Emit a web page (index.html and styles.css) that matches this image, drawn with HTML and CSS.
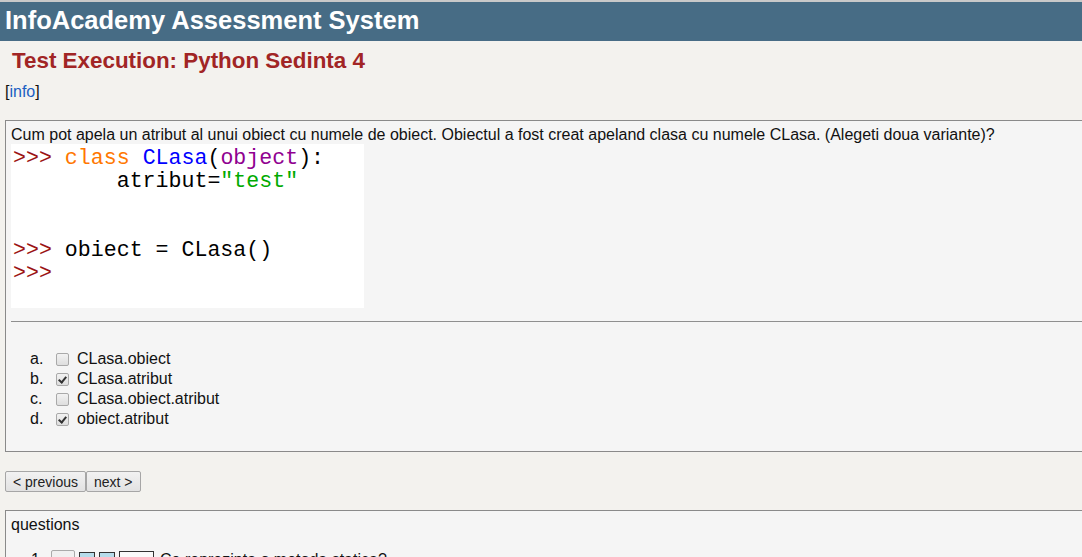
FILE: index.html
```html
<!DOCTYPE html>
<html lang="ro">
<head>
<meta charset="utf-8">
<title>InfoAcademy Assessment System</title>
<link rel="stylesheet" href="styles.css">
</head>
<body>
<header class="topbar">
  <h1 class="site-title">InfoAcademy Assessment System</h1>
</header>
<main class="content">
  <h2 class="page-title">Test Execution: Python Sedinta 4</h2>
  <p class="info">[<a href="#">info</a>]</p>

  <section class="panel question-box">
    <p class="question-text">Cum pot apela un atribut al unui obiect cu numele de obiect. Obiectul a fost creat apeland clasa cu numele CLasa. (Alegeti doua variante)?</p>
<pre class="code"><span class="pr">&gt;&gt;&gt;</span> <span class="kw">class</span> <span class="def">CLasa</span>(<span class="bi">object</span>):
        atribut=<span class="str">"test"</span>


<span class="pr">&gt;&gt;&gt;</span> obiect = CLasa()
<span class="pr">&gt;&gt;&gt;</span> </pre>
    <hr class="sep">
    <ol class="options">
      <li class="option"><span class="letter">a.</span><input type="checkbox" class="chk"><span class="opt-text">CLasa.obiect</span></li>
      <li class="option"><span class="letter">b.</span><input type="checkbox" class="chk" checked><span class="opt-text">CLasa.atribut</span></li>
      <li class="option"><span class="letter">c.</span><input type="checkbox" class="chk"><span class="opt-text">CLasa.obiect.atribut</span></li>
      <li class="option"><span class="letter">d.</span><input type="checkbox" class="chk" checked><span class="opt-text">obiect.atribut</span></li>
    </ol>
  </section>

  <nav class="pager">
    <button class="btn">&lt; previous</button><button class="btn">next &gt;</button>
  </nav>

  <section class="panel questions-box">
    <p class="questions-title">questions</p>
    <div class="q-row">
      <span class="q-num">1.</span>
      <span class="q-box"></span>
      <span class="q-mark"></span>
      <span class="q-mark"></span>
      <span class="q-wide"></span>
      <span class="q-text">Ce reprezinta o metoda statica?</span>
    </div>
  </section>
</main>
</body>
</html>
```

FILE: styles.css
```css
html, body {
  margin: 0;
  padding: 0;
  overflow: hidden;
}
body {
  background: #f3f2ee;
  font-family: "Liberation Sans", Arial, sans-serif;
  color: #111;
  border-top: 2px solid #c9c9c9;
}
.topbar {
  background: #476c85;
  height: 39px;
  display: flex;
  align-items: center;
  padding: 0 5px;
}
.site-title {
  margin: 0;
  color: #fff;
  font-size: 25.5px;
  font-weight: bold;
  line-height: 1;
  position: relative;
  top: -1px;
}
.content {
  padding: 0 5px;
}
.page-title {
  margin: 0;
  padding: 7px 0 0 7px;
  font-size: 22.4px;
  line-height: 26px;
  color: #a12525;
  font-weight: bold;
}
.info {
  margin: 9px 0 0;
  font-size: 16px;
  line-height: 18px;
}
.info a {
  color: #1a5fc2;
  text-decoration: none;
}
.panel {
  background: #f5f5f5;
  border: 1px solid #8a8a8a;
  width: 1100px;
}
.question-box {
  margin-top: 19px;
  padding: 4px 5px 22px;
}
.question-text {
  margin: 0;
  font-size: 16px;
  line-height: 19px;
}
.code {
  margin: 0;
  width: 353px;
  height: 164px;
  box-sizing: border-box;
  background: #fff;
  font-family: "Liberation Mono", "Courier New", monospace;
  font-size: 21.6px;
  line-height: 23px;
  padding: 3px 0 0 2px;
  color: #000;
}
.pr { color: #9b1414; }
.kw { color: #ff7700; }
.def { color: #0000ff; }
.bi { color: #900090; }
.str { color: #00aa00; }
.sep {
  margin: 13px 0 0;
  border: 0;
  border-top: 1px solid #8f8f8f;
  height: 0;
}
.options {
  list-style: none;
  margin: 27px 0 0;
  padding: 0 0 0 19px;
}
.option {
  display: flex;
  align-items: center;
  height: 20px;
  font-size: 16px;
}
.letter {
  width: 26px;
}
.chk {
  appearance: none;
  -webkit-appearance: none;
  margin: 0 8px 0 0;
  width: 13px;
  height: 13px;
  border: 1px solid #a9a9a9;
  border-radius: 2px;
  background: linear-gradient(#f2f2f2, #dedede);
  position: relative;
  box-sizing: border-box;
}
.chk:checked::after {
  content: "";
  position: absolute;
  left: 3px;
  top: 1px;
  width: 3px;
  height: 6px;
  border: solid #333;
  border-width: 0 2px 2px 0;
  transform: rotate(40deg);
}
.opt-text {
  color: #111;
}
.pager {
  margin-top: 19px;
  display: flex;
}
.btn {
  font-family: "Liberation Sans", Arial, sans-serif;
  font-size: 14px;
  height: 21px;
  padding: 0 7px;
  border: 1px solid #a6a6a6;
  border-radius: 2px;
  background: linear-gradient(#f2f2f2, #e2e2e2);
  color: #222;
  margin: 0;
}
.questions-box {
  margin-top: 18px;
  padding: 4px 5px;
  height: 60px;
}
.questions-title {
  margin: 0;
  font-size: 16px;
  line-height: 19px;
}
.q-row {
  display: flex;
  align-items: center;
  margin-top: 15px;
  padding-left: 20px;
  font-size: 16px;
  height: 22px;
}
.q-num {
  width: 20px;
}
.q-box {
  width: 24px;
  height: 20px;
  box-sizing: border-box;
  border: 1px solid #aaa;
  background: #f0f0f0;
  border-radius: 2px;
  margin-right: 4px;
}
.q-mark {
  width: 16px;
  height: 16px;
  box-sizing: border-box;
  border: 1px solid #333;
  background: #b7dcea;
  margin-right: 4px;
}
.q-wide {
  width: 35px;
  height: 18px;
  box-sizing: border-box;
  border: 1px solid #333;
  background: #fafafa;
  margin-right: 6px;
}
```
